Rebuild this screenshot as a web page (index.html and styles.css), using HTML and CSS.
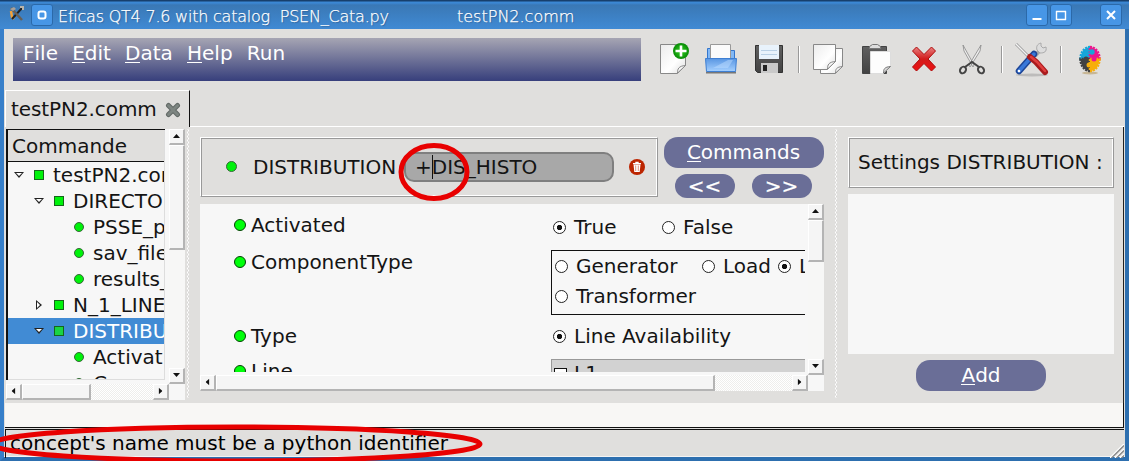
FILE: index.html
```html
<!DOCTYPE html>
<html lang="en">
<head>
<meta charset="utf-8">
<title>Eficas QT4 7.6</title>
<link rel="stylesheet" href="styles.css">
</head>
<body>
<div class="window">
  <header class="titlebar">
    <svg class="app-icon" viewBox="9 6 16 18" width="16" height="18"><path d="M11 12l1 6 2 2" stroke="#f3a23a" stroke-width="2.500" fill="none"/><path d="M12 20L22 9" stroke="#222" stroke-width="2"/><path d="M11 9l11 12" stroke="#685f55" stroke-width="2.500"/><path d="M10 10l4-2 2 2-3 2z" fill="#aaa198"/><path d="M20 8l3 0v3" stroke="#b9b4aa" stroke-width="2" fill="none"/></svg>
    <span class="wbtn pin"><svg viewBox="0 0 22 22" width="22" height="22"><rect x="7.500" y="7.500" width="7" height="7" rx="2" fill="none" stroke="#fff" stroke-width="2"/></svg></span>
    <span class="title">Eficas QT4 7.6 with catalog&nbsp; PSEN_Cata.py</span>
    <span class="title file">testPN2.comm</span>
    <span class="wbtn min"><svg viewBox="0 0 22 22" width="22" height="22"><path d="M6.500 15h9" stroke="#fff" stroke-width="2"/></svg></span>
    <span class="wbtn"><svg viewBox="0 0 22 22" width="22" height="22"><path d="M6 7.500h10M6.500 7v9M15.500 7v9M6 15.500h10" stroke="#fff" stroke-width="1.400"/></svg></span>
    <span class="wbtn close"><svg viewBox="0 0 22 22" width="22" height="22"><path d="M7 7l8 8M15 7l-8 8" stroke="#fff" stroke-width="2"/></svg></span>
  </header>

  <div class="toolbar">
    <nav class="menubar"><span><u>F</u>ile</span><span><u>E</u>dit</span><span><u>D</u>ata</span><span><u>H</u>elp</span><span>Run</span></nav>
    <svg class="icons" viewBox="650 36 460 46" width="460" height="46">
      <defs>
        <linearGradient id="paper" x1="0" y1="0" x2="1" y2="1"><stop offset="0" stop-color="#ececec"/><stop offset=".6" stop-color="#fff"/><stop offset="1" stop-color="#ddd"/></linearGradient>
        <linearGradient id="blue" x1="0" y1="0" x2="0" y2="1"><stop offset="0" stop-color="#5996e2"/><stop offset="1" stop-color="#a5d0ff"/></linearGradient>
        <linearGradient id="dark" x1="0" y1="0" x2="0" y2="1"><stop offset="0" stop-color="#606060"/><stop offset="1" stop-color="#424242"/></linearGradient>
        <linearGradient id="red" x1="0" y1="0" x2="0" y2="1"><stop offset="0" stop-color="#e88080"/><stop offset=".5" stop-color="#d21b1b"/><stop offset="1" stop-color="#f01010"/></linearGradient>
        <radialGradient id="green"><stop offset="0" stop-color="#35d322"/><stop offset="1" stop-color="#078b05"/></radialGradient>
      </defs>
      <path d="M660.500 44.500h25v21l-8 8h-17z" fill="url(#paper)" stroke="#888"/><path d="M677.500 73c0-4 1-7 8-7.500z" fill="#f8f8f8" stroke="#888"/>
      <circle cx="681" cy="51" r="8" fill="url(#green)"/><path d="M681 45.500v11M675.500 51h11" stroke="#fff" stroke-width="2.600"/>

      <path d="M707.500 64V48.500h4V51h19v-.500h4V64z" fill="#82b8f5" stroke="#3476cd"/><path d="M710.500 44.500h20v20h-20z" fill="#fbfbfb" stroke="#999"/><path d="M706 72.500h30" stroke="#777" stroke-width="2"/><path d="M705.500 58.500h31l-1 13h-29z" fill="url(#blue)" stroke="#3e7fd3"/><path d="M713 68l15-8 5 0-5 8z" fill="#bbdcff" opacity=".5"/>

      <path d="M755.500 45.500h27v27h-25l-2-2z" fill="url(#dark)" stroke="#333"/><path d="M759 45h20v14h-20z" fill="#e8f2fb"/><path d="M761 50.500h16M761 54.500h16" stroke="#b9d0e5"/><path d="M761 63h17v10h-17z" fill="#c9c9c9"/><path d="M763 65h4v6h-4z" fill="#222"/>

      <g fill="url(#paper)" stroke="#888"><path d="M820.500 48.500h22v18l-7 7h-15z"/><path d="M835.500 73c0-4 1-6 7-6.500z"/><path d="M813.500 44.500h22v17l-8 8h-14z"/><path d="M827.500 69c0-4 1-7 8-7.500z"/></g>

      <path d="M862.500 46.500h24v27h-24z" fill="url(#dark)" stroke="#444"/><path d="M869.500 48.500v-2l3-2h5l3 2v2z" fill="#ddd" stroke="#777"/><path d="M870.500 51.500h20v15l-7 7h-13z" fill="#fdfdfd" stroke="#ddd"/><path d="M883.500 73c0-4 1-6 7-6.500z" fill="#ddd" stroke="#777"/>

      <path d="M912.500 51l4-4 7.500 7.500 7.500-7.500 4 4-7.500 8 7.500 8-4 4-7.500-7.500-7.500 7.500-4-4 7.500-8z" fill="url(#red)" stroke="#ae0b0b" stroke-linejoin="round"/>

      <path d="M963 45l1 6 9 16 1-2zM981 45l-1 6-10 16-1-2z" fill="#eee" stroke="#888" stroke-width=".8"/><g fill="none" stroke="#444" stroke-width="2"><ellipse cx="963" cy="70" rx="2.800" ry="3.500" transform="rotate(35 963 70)"/><ellipse cx="981" cy="70" rx="2.800" ry="3.500" transform="rotate(-35 981 70)"/><path d="M965 67l7-5 7 5"/></g>

      <ellipse cx="1032" cy="75" rx="16" ry="1.500" fill="#999" opacity=".5"/>
      <path d="M1016 44l16 16" stroke="#999" stroke-width="3"/><path d="M1016 44l15 15" stroke="#f3f3f3" stroke-width="1.300"/>
      <path d="M1035 56l6-7" stroke="#aaa" stroke-width="4"/><path d="M1041 43c-4 1-5 4-4 7l3 3c4 0 7-1 6-6l-3 1-2-2z" fill="#ddd" stroke="#aaa"/>
      <path d="M1019 71l15-17" stroke="#1e4697" stroke-width="6.500" stroke-linecap="round"/><path d="M1019 71l15-17" stroke="#3978d9" stroke-width="3.500" stroke-linecap="round"/><circle cx="1019" cy="71" r="1.300" fill="#fff"/>
      <path d="M1030 57l6 5 9 10" stroke="#a91b1d" stroke-width="6" stroke-linecap="round" fill="none"/><path d="M1031 57l6 5 8 9" stroke="#e03e3e" stroke-width="2.500" stroke-linecap="round" fill="none"/>

      <ellipse cx="1090" cy="73" rx="8" ry="1.500" fill="#c8b795"/>
      <g stroke-width="2.500" stroke-dasharray="2 1"><path d="M1090 59V47A9.500 12 0 0 0 1080.500 59z" fill="#17a6d9" stroke="#17a6d9"/><path d="M1090 59V47A9.500 12 0 0 1 1099.500 59z" fill="#ec168d" stroke="#ec168d"/><path d="M1090 59v12A9.500 12 0 0 1 1080.500 59z" fill="#424242" stroke="#424242"/><path d="M1090 59v12A9.500 12 0 0 0 1099.500 59z" fill="#f7ae0a" stroke="#f7ae0a"/></g>
      <circle cx="1086" cy="59" r="2.500" fill="#424242"/><circle cx="1092" cy="52" r="2.700" fill="#17a6d9"/><circle cx="1094" cy="59" r="2.500" fill="#ec168d"/><circle cx="1089" cy="65" r="2.500" fill="#f7ae0a"/>
      <path d="M798.500 46v27M1001.500 46v27M1060.500 46v27" stroke="#999"/><path d="M799.500 46v27M1002.500 46v27M1061.500 46v27" stroke="#fff"/>
    </svg>
  </div>

  <div class="tabs"><div class="tab">testPN2.comm<svg viewBox="0 0 16 16" width="16" height="16"><path d="M3.500 3.500l9 9M12.500 3.500l-9 9" stroke="#626966" stroke-width="5" stroke-linecap="round"/><path d="M3.500 3.500l9 9M12.500 3.500l-9 9" stroke="#7d8581" stroke-width="3" stroke-linecap="round"/></svg></div></div>

  <main class="panes">
    <section class="tree-pane">
      <div class="tree">
        <div class="tree-head">Commande</div>
        <div class="rows">
          <div class="row l0"><i class="arrow"></i><i class="sq"></i>testPN2.comm</div>
          <div class="row l1"><i class="arrow"></i><i class="sq"></i>DIRECTO</div>
          <div class="row l2"><i class="dot"></i>PSSE_p</div>
          <div class="row l2"><i class="dot"></i>sav_file</div>
          <div class="row l2"><i class="dot"></i>results_</div>
          <div class="row l1"><i class="arrow shut"></i><i class="sq"></i>N_1_LINE</div>
          <div class="row l1 selected"><i class="arrow"></i><i class="sq"></i>DISTRIBU</div>
          <div class="row l2"><i class="dot"></i>Activat</div>
          <div class="row l2"><i class="dot"></i>C</div>
        </div>
      </div>
      <div class="vbar"><b class="up"></b><b class="thumb tree-v"></b><b class="down"></b></div>
      <div class="hbar"><b class="left"></b><b class="thumb tree-h"></b><b class="right"></b></div>
    </section>
    <div class="splitter first"></div>
    <section class="editor">
      <div class="editor-top">
        <div class="frame name"><i class="dot"></i><span class="label">DISTRIBUTION</span><div class="input">+<i class="caret"></i>DIS_HISTO</div>
          <svg class="trash" viewBox="0 0 16 16" width="16" height="16"><circle cx="8" cy="8" r="8" fill="#bc2500"/><path d="M4.500 5.500h7l-.8 7.500H5.300z" fill="#fff"/><path d="M4 4.700h8M6.300 3.500h3.400" stroke="#fff" stroke-width="1.300"/><path d="M6.700 6.500v5.500M9.300 6.500v5.500" stroke="#d87860" stroke-width=".8"/></svg></div>
        <div class="buttons"><button class="pill commands"><span><u>C</u>ommands</span></button><button class="pill nav">&lt;&lt;</button><button class="pill nav">&gt;&gt;</button></div>
      </div>
      <div class="scroll">
        <div class="form">
          <div class="key k1"><i class="bul"></i>Activated</div><div class="val v1"><i class="radio on"></i><span class="true">True</span><i class="radio"></i>False</div>
          <div class="key k2"><i class="bul"></i>ComponentType</div>
          <div class="group"><div class="line"><i class="radio"></i><span class="gen">Generator</span><i class="radio"></i><span class="load">Load</span><i class="radio on"></i>L</div><div class="line"><i class="radio"></i>Transformer</div></div>
          <div class="key k3"><i class="bul"></i>Type</div><div class="val v3"><i class="radio on"></i>Line Availability</div>
          <div class="key k4"><i class="bul"></i>Line</div><div class="list"><i class="check"></i>L1</div>
        </div>
        <div class="vbar"><b class="up"></b><b class="thumb form-v"></b><b class="down"></b></div>
        <div class="hbar"><b class="left"></b><b class="thumb form-h"></b><b class="right"></b></div>
      </div>
    </section>
    <div class="splitter second"></div>
    <section class="settings">
      <div class="frame">Settings DISTRIBUTION :</div>
      <div class="blank"></div>
      <button class="pill add"><span><u>A</u>dd</span></button>
    </section>
  </main>
  <div class="strip"></div>
  <footer class="status"><span>concept's name must be a python identifier</span><svg viewBox="0 0 14 14" width="14" height="14"><path d="M0 14L14 0M5 14l9-9M10 14l4-4" stroke="#fff" stroke-width="1.500"/><path d="M1.500 14L14 1.500M6.500 14L14 6.500M11.500 14l2.500-2.500" stroke="#888" stroke-width="1.300"/></svg></footer>
</div>
<svg class="marks" viewBox="0 0 1129 461" width="1129" height="461"><ellipse cx="434" cy="172" rx="33" ry="26.500"/><ellipse cx="236" cy="444" rx="244" ry="17"/></svg>
</body>
</html>
```

FILE: styles.css
```css
* { box-sizing: border-box; }
body { margin: 0; width: 1129px; height: 461px; overflow: hidden; font: 20px/26px "DejaVu Sans", sans-serif; color: #141414; }
.window { width: 1129px; height: 461px; background: #e0dfdd; border: solid #377fc9; border-width: 0 4px 4px; box-shadow: inset 0 -1px #f4f4f4; display: flex; flex-direction: column; border-bottom-color: #2d6faf; border-right-color: #2d6faf; }
.titlebar { margin: 0 -4px; height: 29px; flex: none; padding: 3px 6px 0 9px; display: flex; align-items: flex-start; background: linear-gradient(#173f6c 0 1px, #3b87d3 2px 3px, #3a78b5 5px, #408ad4); }
.app-icon { margin: 2px 6px 0 0; }
.wbtn { width: 22px; height: 22px; margin: 1px 2px 0 0; flex: none; display: flex; background: #4796e6; border: 1px solid #2b69a9; border-radius: 3px; }
.wbtn svg { margin: -1px; }
.pin { margin-right: 5px; }
.title { color: #fff; font: 200 16px/27px "DejaVu Sans", sans-serif; white-space: pre; text-shadow: 1px 1px 1px #2f6298; width: 399px; letter-spacing: -.22px; -webkit-text-stroke: .25px #fff; }
.file { width: auto; flex: 1; letter-spacing: 0; }
.close { margin: 1px 1px 0 26px; }
u { text-decoration: none; border-bottom: 1px solid currentColor; display: inline-block; line-height: 18px; height: 19px; }

.toolbar { height: 61px; flex: none; display: flex; padding: 7px 0 0 9px; }
.menubar { width: 628px; height: 43px; margin-top: 2px; background: linear-gradient(#a6a5b3, #373f7c); color: #fff; display: flex; gap: 14.200px; padding: 2px 10px; }
.icons { margin-left: 9px; }
.tabs { height: 37px; flex: none; display: flex; margin-left: 1px; }
.tabs::after { content: ""; flex: 1; border-bottom: 1px solid #fff; margin-right: 1px; }
.tab { width: 185px; height: 37px; border: solid; border-width: 1px 1px 0; border-color: #fff #111 #fff #fff; padding: 0 8px 1px 5px; display: flex; align-items: center; justify-content: space-between; letter-spacing: -.08px; }
.tab svg { margin-top: 2px; }

.panes { height: 276px; flex: none; display: flex; margin: 0 1px; padding: 2px 0 0 1px; border-right: 1px solid #222; }
.tree-pane { width: 179px; height: 271px; display: grid; grid-template: 255px 16px / 163px 16px; background: #f7f7f7; }
.tree { width: 159px; height: 251px; border: solid #111; border-width: 1px 0 0 2px; overflow: hidden; box-shadow: inset -1px -1px #ddd; padding: 0 1px 1px 0; }
.tree-head { height: 32px; background: #e0dfdd; border-bottom: 1px solid #111; padding: 3px 0 0 4px; }
.rows { width: 156px; height: 217px; overflow: hidden; }
.row { height: 26px; display: flex; align-items: center; white-space: nowrap; }
.l0 { padding-left: 6px; } .l1 { padding-left: 26px; } .l2 { padding-left: 66px; }
.arrow { width: 10px; height: 6px; flex: none; background: #222; clip-path: polygon(0 0, 100% 0, 50% 100%); margin-right: 10px; position: relative; }
.arrow::after { content: ""; position: absolute; inset: 1px 2px 2px; background: #fff; clip-path: polygon(0 0, 100% 0, 50% 100%); }
.shut { transform: rotate(-90deg); }
.sq { width: 10px; height: 10px; background: #00f20b; border: 1px solid #15661a; margin-right: 9px; flex: none; }
.dot { width: 10px; height: 10px; background: #00f20b; border: 1px solid #376638; border-radius: 50%; margin-right: 9px; flex: none; }
.selected { background: #418bd4; color: #fff; }
.selected .sq { background: #19d443; }

.vbar, .hbar { display: flex; background: repeating-conic-gradient(#fff 0 25%, #eeeeec 0 50%) 0 / 2px 2px; }
.vbar { flex-direction: column; }
.vbar b, .hbar b { background: #f5f5f5; border: 1px solid #fff; border-right: 2px solid #b4b4b4; border-bottom: 2px solid #b4b4b4; flex: none; position: relative; }
.up, .down, .left, .right { width: 16px; height: 16px; }
.down { margin-top: auto; } .right { margin-left: auto; }
.up::after, .down::after, .left::after, .right::after { content: ""; position: absolute; left: 3px; top: 4px; width: 7px; height: 4px; background: #111; clip-path: polygon(50% 0, 100% 100%, 0 100%); }
.down::after { transform: rotate(180deg); } .left::after { transform: rotate(-90deg); } .right::after { transform: rotate(90deg); }
.tree-v { height: 105px; } .tree-h { width: 69px; }
.splitter { width: 2px; background: repeating-conic-gradient(#fff 0 25%, #d8d7d5 0 50%) 0 / 2px 4px; }
.first { height: 269px; margin: 0 11px 0 2px; }
.second { height: 269px; margin: 0 11px; }

.editor { width: 624px; padding-top: 8px; }
.editor-top { display: flex; gap: 6px; height: 67px; }
.frame { border: 1px solid; border-color: #fff #999 #999 #fff; box-shadow: inset 1px 1px #999, inset -1px -1px #fff; }
.name { width: 458px; height: 60px; display: flex; align-items: center; padding: 0 0 1px 25px; }
.name .dot { width: 11px; height: 11px; margin-right: 16px; }
.label { width: 151px; }
.input { width: 210px; height: 30px; border: 2px solid #7f7f7f; border-radius: 10px; background: #a8a8a8; padding-left: 9px; display: flex; align-items: center; }
.caret { width: 1px; height: 24px; background: #111; margin-right: -1px; }
.trash { margin-left: 15px; }
.buttons { width: 160px; height: 60px; display: grid; grid-template: 31px 24px / 60px 60px; gap: 6px 17px; justify-content: center; margin-left: -1px; }
.pill { background: #6a6e97; color: #fff; border: 0; border-radius: 14px; padding: 0 0 1px; font: 20px/26px "DejaVu Sans", sans-serif; display: flex; align-items: center; justify-content: center; }
.commands { grid-column: 1 / 3; width: 160px; margin-left: -11px; }
.nav { border-radius: 12px; -webkit-text-stroke: .2px #fff; }
.scroll { height: 187px; background: #f7f7f7; display: grid; grid-template: 171px 16px / 608px 16px; }
.form { width: 605px; height: 168px; overflow: hidden; display: grid; grid-template: 46px 65px 44px 60px / 351px 254px; white-space: nowrap; }
.key { display: flex; padding-left: 34px; height: 26px; align-items: center; }
.bul { width: 12px; height: 12px; border: 1px solid #063f06; border-radius: 50%; background: #00ff0a; margin-right: 5px; }
.k1 { margin-top: 8px; } .k2 { margin-top: -1px; } .k3 { margin-top: 8px; } .k4 { margin-top: -1px; }
.val, .line { display: flex; align-items: center; height: 26px; }
.v1 { margin: 10px 0 0 2px; } .v3 { margin: 8px 0 0 2px; }
.radio { width: 13px; height: 13px; border: 1px solid #222; border-radius: 50%; background: #fff; flex: none; margin-right: 8px; }
.on { background: radial-gradient(circle, #111 0 2.300px, #fff 3px); }
.true { width: 88px; }
.group { border: 1px solid #111; border-right: 0; padding: 2px 0 0 3px; overflow: hidden; }
.line { margin-bottom: 4px; }
.gen { width: 126px; flex: none; } .load { width: 55px; flex: none; }
.list { background: #d2d2d2; border: 1px solid #999; border-right: 0; padding: 0 0 0 2px; display: flex; align-items: flex-start; }
.check { width: 13px; height: 13px; border: 1px solid #111; background: #fff; margin: 8px 7px 0 0; flex: none; }
.form-v { height: 42px; } .form-h { width: 499px; }

.settings { width: 266px; padding-top: 8px; display: flex; flex-direction: column; }
.settings .frame { height: 51px; padding: 11px 0 0 9px; white-space: nowrap; }
.blank { height: 160px; margin-top: 6px; background: #f7f7f7; }
.add { width: 130px; height: 31px; margin: 6px 0 0 68px; }
.strip { height: 25px; flex: none; margin: 0 1px; background: #f8f7f5; border-bottom: 1px solid #111; border-right: 1px solid #111; }
.status { flex: 1; margin: 1px 1px 1px; border-top: 1px solid #111; border-left: 1px solid #111; display: flex; justify-content: space-between; align-items: flex-end; padding-left: 4px; color: #000; }
.status span { line-height: 26px; height: 28px; white-space: nowrap; }
.marks { position: absolute; left: 0; top: 0; pointer-events: none; fill: none; stroke: #e80000; stroke-width: 5; }
```
